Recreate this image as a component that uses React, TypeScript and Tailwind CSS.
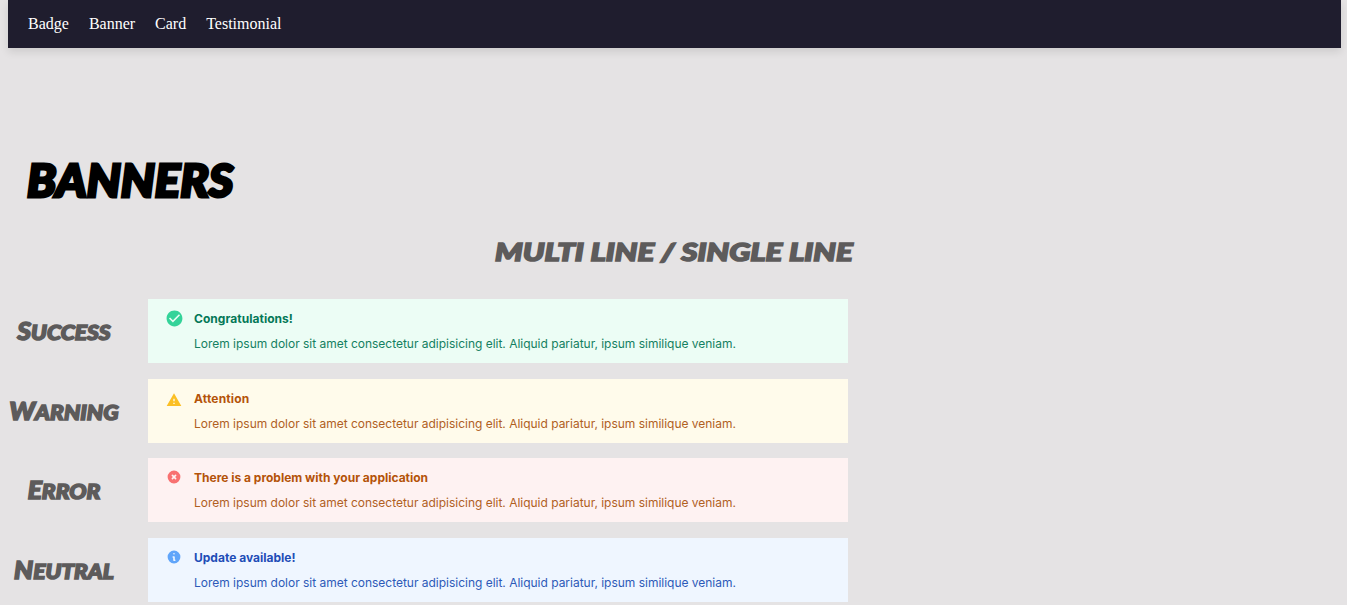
import { HiXCircle, HiInformationCircle } from "react-icons/hi";
import { MdCheckCircle, MdWarning } from "react-icons/md";

const marker = "font-['Permanent_Marker','Lato',sans-serif] font-black italic whitespace-nowrap";
const body = "Lorem ipsum dolor sit amet consectetur adipisicing elit. Aliquid pariatur, ipsum similique veniam.";

const rows = [
  { label: "Success", titleSpacing: "tracking-[0.04px]", title: "Congratulations!", box: "bg-[#ecfdf5]", head: "text-[#047857]", text: "text-[#148061]", icon: <MdCheckCircle className="size-[19px] text-[#34d399]" /> },
  { label: "Warning", titleSpacing: "tracking-[0.15px]", title: "Attention", box: "bg-[#fffbeb]", head: "text-[#b45309]", text: "text-[#b0601f]", icon: <MdWarning className="mt-[4px] size-4 text-[#fbbf24]" /> },
  { label: "Error", titleSpacing: "tracking-normal", title: "There is a problem with your application", box: "bg-[#fef2f2]", head: "text-[#b45309]", text: "text-[#b0601f]", icon: <HiXCircle className="size-4 text-[#f87171]" /> },
  { label: "Neutral", titleSpacing: "tracking-normal", title: "Update available!", box: "bg-[#eff6ff]", head: "text-[#1e4db7]", text: "text-[#2d5ab8]", icon: <HiInformationCircle className="size-4 text-[#60a5fa]" /> },
];

export default function App() {
  return (
    <div className="h-[605px] overflow-hidden bg-[#e5e3e4] pl-2">
      <nav className="mr-[6px] flex h-12 items-center gap-5 bg-[#1f1d2e] pl-5 font-['Liberation_Serif',serif] text-base text-white shadow-[0_4px_8px_rgba(0,0,0,0.1)]">
        <a>Badge</a>
        <a>Banner</a>
        <a>Card</a>
        <a>Testimonial</a>
      </nav>
      <h1 className={`${marker} mt-[104px] ml-[19px] h-14 w-fit origin-left scale-x-[1.05] text-[45px] leading-[56px] text-black [-webkit-text-stroke:3px_currentColor]`}>BANNERS</h1>
      <h2 className={`${marker} mt-[23px] ml-[487px] h-10 w-fit origin-left scale-x-[1.23] text-[25.5px] leading-10 text-[#5d5b5b] [-webkit-text-stroke:1.6px_currentColor]`}>MULTI LINE / SINGLE LINE</h2>
      <div className="mt-7 flex flex-col gap-[15.6px]">
        {rows.map((r) => (
          <section key={r.label} className="flex h-16 shrink-0">
            <h3 className={`${marker} ml-px w-[110px] scale-x-[1.06] text-center text-[21.5px] leading-[66px] text-[#5d5b5b] uppercase first-letter:text-[25px] first-letter:leading-none [-webkit-text-stroke:1.6px_currentColor]`}>{r.label}</h3>
            <div className={`${r.box} ml-[29px] flex w-[700px] font-['Inter',sans-serif]`}>
              <div className="mt-[9px] ml-4 flex size-5 items-center justify-center self-start">{r.icon}</div>
              <div className="ml-[10px] pt-[10px]">
                <p className={`${r.head} ${r.titleSpacing} text-[12px] leading-5 font-bold`}>{r.title}</p>
                <p className={`${r.text} mt-[5px] text-[12px] leading-5 tracking-[-0.016px]`}>{body}</p>
              </div>
            </div>
          </section>
        ))}
      </div>
    </div>
  );
}
